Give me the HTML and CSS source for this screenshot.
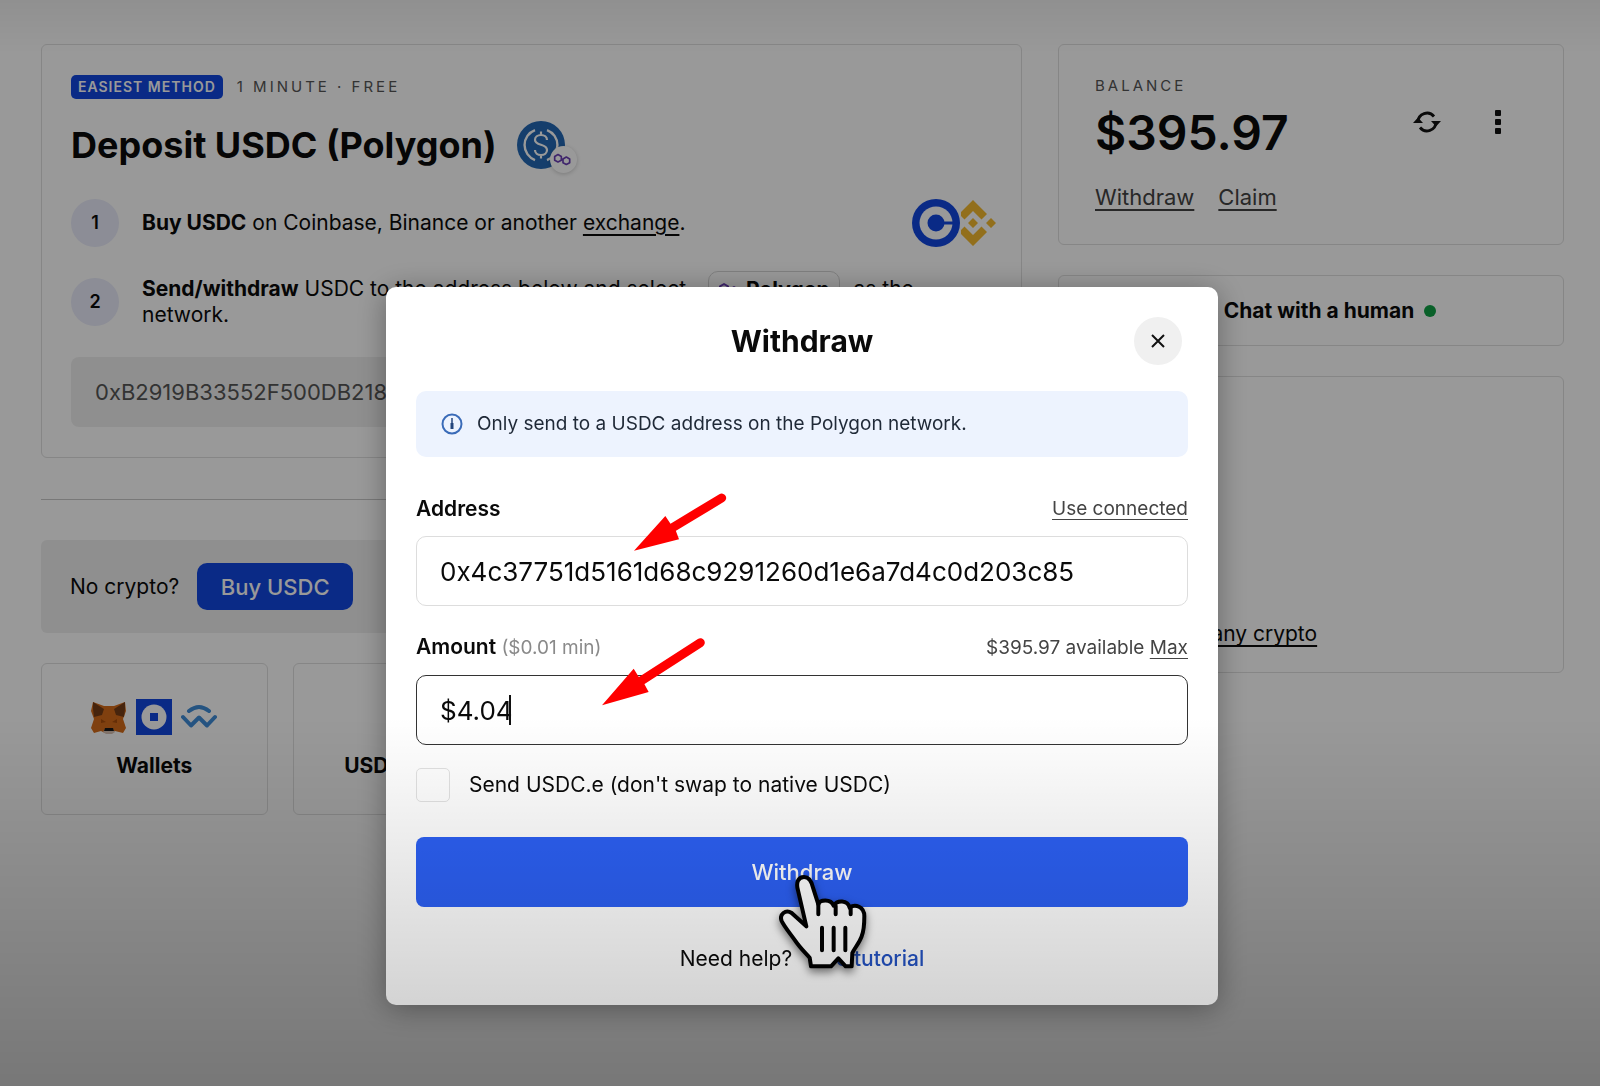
FILE: index.html
```html
<!DOCTYPE html>
<html lang="en">
<head>
    <meta charset="UTF-8">
    <meta name="viewport" content="width=device-width, initial-scale=1.0">
    <title>Deposit USDC</title>
    <link rel="stylesheet" href="styles.css">
</head>
<body>
    <svg class="defs" width="0" height="0" aria-hidden="true">
        <symbol id="polygon" viewBox="0 0 24 18">
            <path d="M6 3l4 2.300v4.600L6 12 2 9.900V5.300zM16 6l4 2.300v4.600L16 15l-4-2.100V8.300zM10 8l2 1.500" fill="none" stroke="#6b3fb5" stroke-width="2" stroke-linejoin="round"/>
        </symbol>
    </svg>

    <div class="page">
        <main class="main">
            <section class="card deposit">
                <div class="tags">
                    <span class="badge">EASIEST METHOD</span>
                    <span class="overline">1 MINUTE · FREE</span>
                </div>
                <div class="title-row">
                    <h1>Deposit USDC (Polygon)</h1>
                    <span class="token">
                        <svg width="48" height="48" viewBox="0 0 48 48">
                            <circle cx="24" cy="24" r="24" fill="#2368b4"/>
                            <path d="M18 9a16 16 0 0 0 0 30M30 9a16 16 0 0 1 0 30" fill="none" stroke="#fff" stroke-width="2.400"/>
                            <path d="M30 19c0-3-2.500-5-6-5s-6 2-6 4.700c0 6.600 12 3.600 12 10.300 0 3-2.500 5-6 5s-6-2-6-5M24 10.500V14M24 34v3.500" fill="none" stroke="#fff" stroke-width="2.200"/>
                        </svg>
                        <span class="network"><svg width="20" height="15"><use href="#polygon"/></svg></span>
                    </span>
                </div>
                <div class="step">
                    <span class="num">1</span>
                    <p><b>Buy USDC</b> on Coinbase, Binance or another <a href="#">exchange</a>.</p>
                    <span class="exchanges">
                        <svg width="48" height="48" viewBox="0 0 48 48">
                            <circle cx="24" cy="24" r="24" fill="#1147e0"/>
                            <circle cx="24" cy="24" r="16.500" fill="#fff"/>
                            <circle cx="24" cy="24" r="8.500" fill="#1147e0"/>
                            <path d="M30 24h12" stroke="#1147e0" stroke-width="3"/>
                        </svg>
                        <svg width="35" height="48" viewBox="0 0 35 48" fill="#f3ba2f">
                            <path d="M12 1L26 15 20.500 20.500 12 12 3.500 20.500 0 17V13zM12 47L26 33 20.500 27.500 12 36 3.500 27.500 0 31V35zM12 19l5 5-5 5-5-5zM30 19l5 5-5 5-5-5z"/>
                        </svg>
                    </span>
                </div>
                <div class="step">
                    <span class="num">2</span>
                    <p><b>Send/withdraw</b> USDC to the address below and select <span class="pill"><svg width="24" height="18"><use href="#polygon"/></svg><b>Polygon</b></span> as the network.</p>
                </div>
                <div class="wallet-address">0xB2919B33552F500DB218</div>
            </section>

            <hr>

            <section class="buy-bar">
                <span>No crypto?</span>
                <button class="buy">Buy USDC</button>
            </section>

            <section class="methods">
                <div class="card method">
                    <div class="logos">
                        <svg width="36" height="36" viewBox="0 0 36 36">
                            <path d="M2 3l11 4h10l11-4 1 9-3 8 3 9-3 5-8-2-4 2h-6l-4-2-7 2-3-5 3-9-3-8z" fill="#d56c1a"/>
                            <path d="M2 3l11 7-2 6-8 2-1-8zM34 3l-11 7 2 6 8 2 1-8z" fill="#763d16"/>
                            <path d="M10 20l5 3-5 1zM26 20l-5 3 5 1z" fill="#a84e0c"/>
                            <path d="M14 30h8l2 3-3 2h-6l-3-2z" fill="#d7c1b3"/>
                            <path d="M14 29h8l1 3h-10z" fill="#161616"/>
                        </svg>
                        <svg width="36" height="36" viewBox="0 0 36 36">
                            <path d="M0 0h36v36H0z" fill="#1147e0"/>
                            <circle cx="18" cy="18" r="12.500" fill="#fff"/>
                            <path d="M14 14h8v8h-8z" fill="#1147e0"/>
                        </svg>
                        <svg width="36" height="36" viewBox="0 0 36 36" fill="none" stroke="#3f8cd8" stroke-width="4" stroke-linecap="round" stroke-linejoin="round">
                            <path d="M8 12q10-8 20 0M2 18l8 8.500 8-8 8 8 8-8.500"/>
                        </svg>
                    </div>
                    <b>Wallets</b>
                </div>
                <div class="card method">
                    <div class="logos"></div>
                    <b>USDC (ETH)</b>
                </div>
                <div class="card method"></div>
                <div class="card method"></div>
            </section>
        </main>

        <aside class="side">
            <section class="card balance">
                <div>
                    <div class="overline">BALANCE</div>
                    <div class="total">$395.97</div>
                    <nav class="links">
                        <a href="#">Withdraw</a>
                        <a href="#">Claim</a>
                    </nav>
                </div>
                <div class="tools">
                    <button aria-label="Refresh">
                        <svg width="28" height="24" viewBox="0 0 28 24">
                            <path d="M5 12a9 9 0 0 1 16-5.500M23 12a9 9 0 0 1-16 5.500" fill="none" stroke="#111" stroke-width="2.800"/>
                            <path d="M0 13h10l-5-5.500zM18 11h10l-5 5.500z" fill="#111"/>
                        </svg>
                    </button>
                    <button aria-label="More">
                        <svg width="6" height="24" viewBox="0 0 6 24" fill="#111">
                            <rect width="6" height="6" rx="1"/>
                            <rect y="9" width="6" height="6" rx="1"/>
                            <rect y="18" width="6" height="6" rx="1"/>
                        </svg>
                    </button>
                </div>
            </section>
            <section class="card chat">
                <svg width="28" height="28" viewBox="0 0 28 28"><path d="M3 4h22v16H12l-6 5v-5H3z" fill="none" stroke="#111" stroke-width="2"/></svg>
                <b>Chat with a human</b>
                <i class="online"></i>
            </section>
            <section class="card guide">
                <a href="#">Deposit via any crypto</a>
            </section>
        </aside>
    </div>

    <div class="overlay">
        <form class="modal" role="dialog" aria-labelledby="modal-title">
            <header>
                <h2 id="modal-title">Withdraw</h2>
                <button type="button" class="close" aria-label="Close">
                    <svg width="14" height="14" viewBox="0 0 14 14"><path d="M1 1l12 12M13 1L1 13" stroke="#111" stroke-width="2"/></svg>
                </button>
            </header>

            <div class="info">
                <svg width="22" height="22" viewBox="0 0 22 22">
                    <circle cx="11" cy="11" r="9.500" fill="none" stroke="#3a6bb8" stroke-width="2"/>
                    <path d="M11 5v10" stroke="#24467c" stroke-width="1.500"/>
                    <path d="M11 10v6" stroke="#24467c" stroke-width="3"/>
                </svg>
                Only send to a USDC address on the Polygon network.
            </div>

            <div class="label-row">
                <label for="address">Address</label>
                <a href="#">Use connected</a>
            </div>
            <input id="address" class="field" type="text" value="0x4c37751d5161d68c9291260d1e6a7d4c0d203c85">

            <div class="label-row">
                <label for="amount">Amount <span>($0.01 min)</span></label>
                <span>$395.97 available <a href="#">Max</a></span>
            </div>
            <div class="amount">
                <input id="amount" class="field active" type="text" value="$4.04">
                <i class="caret"></i>
            </div>

            <label class="check"><input type="checkbox"> Send USDC.e (don't swap to native USDC)</label>

            <button type="submit" class="submit">Withdraw</button>
            <p class="help">Need help? <a href="#">See tutorial</a></p>

            <svg class="arrow arrow-address" viewBox="756 636 288 180" fill="red">
                <path d="M876 744L1025 654" stroke="red" stroke-width="27" stroke-linecap="round"/>
                <path d="M762 812L856 708 872 732 888 754 897 778z"/>
            </svg>
            <svg class="arrow arrow-amount" viewBox="660 108 324 213" fill="red">
                <path d="M784 242L961 128" stroke="red" stroke-width="27" stroke-linecap="round"/>
                <path d="M666 316L761 206 776 230 793 252 806 276z"/>
            </svg>
            <svg class="hand" viewBox="412 160 276 300">
                <path d="M500 320L475 212C468 188 476 172 493 172c16 0 23 14 27 32l16 50c4-14 37-18 46 4 10-18 42-18 48 6 16-12 44-4 44 26 0 22 0 40-8 60-8 22-22 36-28 50l-2 40-18 0-22-24-22 24h-60l-4-26c-10-12-28-28-44-52-16-22-34-44-40-58-8-20 12-36 30-24z" fill="#fff" stroke="#000" stroke-width="12" stroke-linejoin="round"/>
                <path d="M536 250v34M588 258v26M633 262v22M547 324v68M582 324v68M617 324v68" fill="none" stroke="#000" stroke-width="12" stroke-linecap="round"/>
            </svg>
        </form>
    </div>
    <div class="shade"></div>
</body>
</html>
```
FILE: styles.css
```css
* {
    box-sizing: border-box;
    margin: 0;
    padding: 0;
}
body {
    min-height: 100vh;
    background: #fff;
    color: #0a0a0a;
    font-family: Inter, "Liberation Sans", sans-serif;
    font-size: 21px;
    line-height: 26px;
}
a {
    color: inherit;
    text-underline-offset: 4px;
}
b {
    font-weight: 700;
}
button {
    border: none;
    background: none;
    color: inherit;
    font: inherit;
    cursor: pointer;
}
svg {
    display: block;
    flex-shrink: 0;
}
.defs {
    position: absolute;
}
.page {
    display: grid;
    grid-template-columns: minmax(0, 1fr) 506px;
    gap: 36px;
    padding: 44px 36px 0 41px;
}
.card {
    border: 1px solid #e0e0e0;
    border-radius: 6px;
}

/* deposit card */
.deposit {
    padding: 30px 29px;
}
.tags {
    display: flex;
    align-items: center;
    gap: 14px;
}
.badge {
    padding: 0 7px;
    border-radius: 5px;
    background: #1147e0;
    color: #fff;
    font-size: 14px;
    font-weight: 600;
    line-height: 24px;
    letter-spacing: 1px;
}
.overline {
    color: #555;
    font-size: 15px;
    line-height: 24px;
    letter-spacing: 3px;
}
.title-row {
    display: flex;
    align-items: center;
    gap: 20px;
    margin: 22px 0 30px;
}
h1 {
    font-size: 36px;
    font-weight: 700;
    line-height: 48px;
}
.token {
    position: relative;
}
.network {
    position: absolute;
    right: -12px;
    bottom: -4px;
    display: flex;
    align-items: center;
    justify-content: center;
    width: 27px;
    height: 27px;
    border-radius: 50%;
    background: #fff;
    box-shadow: 0 1px 4px rgba(0, 0, 0, 0.2);
}
.step {
    display: flex;
    align-items: center;
    gap: 23px;
    height: 48px;
    margin-bottom: 31px;
}
.step p {
    flex: 1;
}
.num {
    width: 48px;
    height: 48px;
    border-radius: 50%;
    background: #e9ebfa;
    font-size: 18px;
    font-weight: 600;
    line-height: 48px;
    text-align: center;
}
.exchanges {
    display: flex;
    gap: 1px;
    margin-right: -4px;
}
.pill {
    display: inline-flex;
    align-items: center;
    gap: 4px;
    height: 38px;
    margin: -8px 8px -8px 16px;
    padding: 0 9px;
    border: 1px solid #d5d5d5;
    border-radius: 10px;
    vertical-align: middle;
}
.wallet-address {
    padding: 22px 24px;
    border-radius: 8px;
    background: #efefef;
    color: #555;
    font-size: 22px;
}
hr {
    margin: 41px 0 40px;
    border: none;
    border-top: 1px solid #c8c8c8;
}
.buy-bar {
    display: flex;
    align-items: center;
    gap: 18px;
    padding: 23px 29px;
    border-radius: 6px;
    background: #efefef;
}
.buy {
    width: 156px;
    height: 47px;
    border-radius: 10px;
    background: #1147e0;
    color: #fff;
    font-size: 22px;
    font-weight: 500;
}
.methods {
    display: grid;
    grid-template-columns: repeat(4, 1fr);
    gap: 25px;
    margin-top: 30px;
}
.method {
    height: 152px;
    padding-top: 35px;
    text-align: center;
}
.logos {
    display: flex;
    justify-content: center;
    gap: 9px;
    height: 36px;
    margin-bottom: 18px;
}

/* right column */
.side {
    display: flex;
    flex-direction: column;
    gap: 30px;
}
.balance {
    display: flex;
    justify-content: space-between;
    padding: 29px 62px 34px 36px;
}
.total {
    font-size: 48px;
    font-weight: 600;
    line-height: 70px;
}
.links {
    display: flex;
    gap: 24px;
    margin-top: 16px;
    color: #444;
    font-size: 22px;
}
.tools {
    display: flex;
    align-items: flex-start;
    gap: 54px;
    padding-top: 36px;
}
.chat {
    display: flex;
    align-items: center;
    justify-content: center;
    gap: 10px;
    height: 71px;
}
.online {
    width: 12px;
    height: 12px;
    border-radius: 50%;
    background: #0fa045;
}
.guide {
    height: 297px;
    padding: 244px 36px 0;
}

/* withdraw modal */
.overlay {
    position: fixed;
    inset: 0;
    display: flex;
    align-items: flex-start;
    justify-content: center;
    padding: 287px 0 0 4px;
    background: rgba(0, 0, 0, 0.4);
}
.modal {
    position: relative;
    width: 832px;
    padding: 30px;
    border-radius: 10px;
    background: #fff;
    box-shadow: 0 4px 30px rgba(0, 0, 0, 0.35);
}
.modal header {
    display: grid;
    grid-template-columns: 48px 1fr 48px;
    align-items: center;
    padding: 0 6px;
}
h2 {
    grid-column: 2;
    font-size: 30px;
    font-weight: 700;
    line-height: 48px;
    text-align: center;
}
.close {
    display: flex;
    align-items: center;
    justify-content: center;
    width: 48px;
    height: 48px;
    border-radius: 50%;
    background: #f0f0f0;
}
.info {
    display: flex;
    align-items: center;
    gap: 14px;
    height: 66px;
    margin: 26px 0 39px;
    padding: 0 25px;
    border-radius: 10px;
    background: #edf3fe;
    color: #1f2937;
    font-size: 19px;
}
.label-row {
    display: flex;
    align-items: center;
    justify-content: space-between;
    margin-bottom: 14px;
    color: #444;
    font-size: 19px;
}
.label-row label {
    color: #0a0a0a;
    font-size: 21px;
    font-weight: 600;
}
.label-row label span {
    color: #8a8a8a;
    font-size: 19px;
    font-weight: 400;
}
.field {
    display: block;
    width: 100%;
    height: 70px;
    margin-bottom: 28px;
    padding: 0 23px;
    border: 1px solid #ddd;
    border-radius: 10px;
    background: #fff;
    color: #0a0a0a;
    font: inherit;
    font-size: 26px;
    outline: none;
}
.field.active {
    border-color: #333;
}
.amount {
    position: relative;
}
.caret {
    position: absolute;
    top: 20px;
    left: 93px;
    width: 2px;
    height: 30px;
    background: #111;
}
.check {
    display: flex;
    align-items: center;
    gap: 19px;
    margin: -5px 0 35px;
}
.check input {
    appearance: none;
    width: 34px;
    height: 34px;
    border: 1px solid #e2e2e2;
    border-radius: 5px;
    background: #fff;
}
.submit {
    display: block;
    width: 100%;
    height: 70px;
    border-radius: 8px;
    background: #2c60f4;
    color: #fff;
    font-size: 22px;
    font-weight: 500;
}
.help {
    margin: 39px 0 3px;
    text-align: center;
}
.help a {
    margin-left: 12px;
    color: #2453c4;
    font-weight: 500;
    text-decoration: none;
}
.arrow,
.hand {
    position: absolute;
}
.arrow-address {
    top: 205px;
    left: 246px;
    width: 96px;
    height: 60px;
}
.arrow-amount {
    top: 349px;
    left: 214px;
    width: 108px;
    height: 71px;
}
.hand {
    top: 586px;
    left: 391px;
    width: 92px;
    height: 100px;
    filter: drop-shadow(0 4px 4px rgba(0, 0, 0, 0.5));
}
.shade {
    position: fixed;
    inset: 0;
    background: linear-gradient(rgba(0, 0, 0, 0.06), transparent 5%, transparent 66%, rgba(0, 0, 0, 0.22));
    pointer-events: none;
}
```
